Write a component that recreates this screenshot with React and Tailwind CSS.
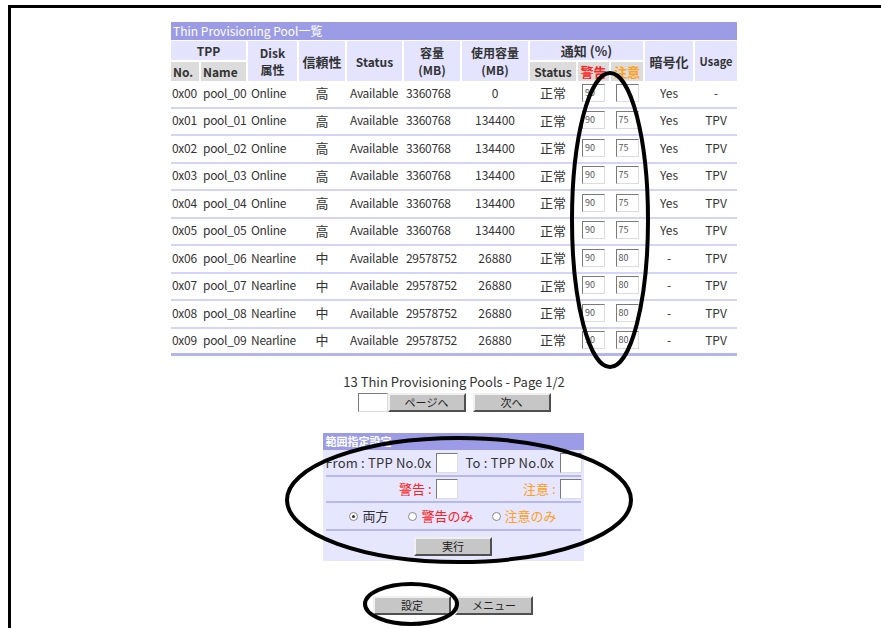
import React from 'react'

const cols = 'grid grid-cols-[28px_45px_49px_46px_55px_56px_66px_46px_31px_32px_48px_42px] gap-x-[2px]'

const pools = [
  ['0x00', 'pool_00', 'Online', '高', 'Available', '3360768', '0', '90', '', 'Yes', '-'],
  ['0x01', 'pool_01', 'Online', '高', 'Available', '3360768', '134400', '90', '75', 'Yes', 'TPV'],
  ['0x02', 'pool_02', 'Online', '高', 'Available', '3360768', '134400', '90', '75', 'Yes', 'TPV'],
  ['0x03', 'pool_03', 'Online', '高', 'Available', '3360768', '134400', '90', '75', 'Yes', 'TPV'],
  ['0x04', 'pool_04', 'Online', '高', 'Available', '3360768', '134400', '90', '75', 'Yes', 'TPV'],
  ['0x05', 'pool_05', 'Online', '高', 'Available', '3360768', '134400', '90', '75', 'Yes', 'TPV'],
  ['0x06', 'pool_06', 'Nearline', '中', 'Available', '29578752', '26880', '90', '80', '-', 'TPV'],
  ['0x07', 'pool_07', 'Nearline', '中', 'Available', '29578752', '26880', '90', '80', '-', 'TPV'],
  ['0x08', 'pool_08', 'Nearline', '中', 'Available', '29578752', '26880', '90', '80', '-', 'TPV'],
  ['0x09', 'pool_09', 'Nearline', '中', 'Available', '29578752', '26880', '90', '80', '-', 'TPV'],
]

const SmallBox = ({ value }) => (
  <div className="w-[23px] h-[18px] bg-white border border-t-[#7a7a7a] border-l-[#7a7a7a] border-b-[#dcdcdc] border-r-[#dcdcdc] text-[9px] text-[#555] leading-[16px] pl-[2px]">
    {value}
  </div>
)

const FormBox = () => (
  <div className="w-[22px] h-[20px] bg-white border border-t-[#7a7a7a] border-l-[#7a7a7a] border-b-[#dcdcdc] border-r-[#dcdcdc]" />
)

const Btn = ({ children }) => (
  <button className="w-[78px] h-[19px] bg-[#c6c6c6] border-2 border-t-[#f0f0f0] border-l-[#f0f0f0] border-b-[#505050] border-r-[#505050] text-[11px] leading-none text-[#222]">
    {children}
  </button>
)

const Radio = ({ checked }) => (
  <span className="w-[9px] h-[9px] rounded-full bg-white border border-[#888] flex items-center justify-center">
    {checked && <span className="w-[3px] h-[3px] rounded-full bg-[#333]" />}
  </span>
)

const Hd = ({ className = '', children }) => (
  <div className={`bg-[#e4e4ff] flex flex-col items-center justify-center font-bold text-[#333] leading-[17px] ${className}`}>
    {children}
  </div>
)

export default function App() {
  return (
    <div className="relative w-[881px] h-[628px] overflow-hidden bg-white pt-[5px] pl-[8px] font-['Noto_Sans_CJK_JP','Noto_Sans',sans-serif] text-[12px] text-[#333]">
      <div className="h-[623px] border-t-[3px] border-l-[3px] border-black">
        <div className="ml-[160px] w-[566px] mt-[14px]">
          <div className="h-[18px] bg-[#9c9ce6] text-white text-[12px] leading-[18px] pl-[2px]">
            Thin Provisioning Pool一覧
          </div>

          <div className={`${cols} gap-y-[2px] mt-[1px] grid-rows-[19px_19px] text-[12px]`}>
            <Hd className="col-span-2 text-[12px]">TPP</Hd>
            <Hd className="col-start-3 row-span-2 text-[12px]">
              <span>Disk</span>
              <span>属性</span>
            </Hd>
            <Hd className="col-start-4 row-span-2 text-[13px]">信頼性</Hd>
            <Hd className="col-start-5 row-span-2 text-[12px]">Status</Hd>
            <Hd className="col-start-6 row-span-2 text-[12px]">
              <span>容量</span>
              <span>(MB)</span>
            </Hd>
            <Hd className="col-start-7 row-span-2 text-[12px]">
              <span>使用容量</span>
              <span>(MB)</span>
            </Hd>
            <Hd className="col-start-8 col-span-3 text-[13px]">通知 (%)</Hd>
            <Hd className="col-start-11 row-span-2 text-[13px]">暗号化</Hd>
            <Hd className="col-start-12 row-span-2 text-[11px]">Usage</Hd>
            <div className="row-start-2 col-start-1 bg-[#dcdcdc] flex items-center pl-[2px] font-bold">No.</div>
            <div className="row-start-2 col-start-2 bg-[#dcdcdc] flex items-center pl-[2px] font-bold">Name</div>
            <div className="row-start-2 col-start-8 bg-[#dcdcdc] flex items-center justify-center font-bold text-[12px]">Status</div>
            <div className="row-start-2 col-start-9 bg-[#dcdcdc] flex items-center justify-center font-bold text-[13px] text-[#ff2020]">警告</div>
            <div className="row-start-2 col-start-10 bg-[#dcdcdc] flex items-center justify-center font-bold text-[13px] text-[#ffa020]">注意</div>
          </div>

          {pools.map((p, i) => (
            <div
              key={p[0]}
              className={`${cols} h-[27.5px] items-center pb-[2px] ${i === pools.length - 1 ? 'border-b-[3px] border-[#b4b4ee]' : 'border-b-2 border-[#d4d4fa]'}`}
            >
              <span className="pl-[1px] tracking-[-0.3px]">{p[0]}</span>
              <span className="pl-[2px] tracking-[-0.3px]">{p[1]}</span>
              <span className="pl-[3px] tracking-[-0.3px]">{p[2]}</span>
              <span className="text-center text-[13px]">{p[3]}</span>
              <span className="pl-[3px] tracking-[-0.3px]">{p[4]}</span>
              <span className="pl-[2px] tracking-[-0.3px]">{p[5]}</span>
              <span className="text-center">{p[6]}</span>
              <span className="text-center text-[13px]">正常</span>
              <span className="flex justify-center"><SmallBox value={p[7]} /></span>
              <span className="flex justify-center"><SmallBox value={p[8]} /></span>
              <span className="text-center">{p[9]}</span>
              <span className="text-center">{p[10]}</span>
            </div>
          ))}

          <div className="mt-[18px] text-center text-[13px] leading-[16px]">
            13 Thin Provisioning Pools - Page 1/2
          </div>
          <div className="mt-[3px] flex justify-center items-center">
            <div className="w-[30px] h-[19px] bg-white border border-t-[#7a7a7a] border-l-[#7a7a7a] border-b-[#dcdcdc] border-r-[#dcdcdc]" />
            <Btn>ページへ</Btn>
            <div className="w-[7px]" />
            <Btn>次へ</Btn>
          </div>

          <div className="mt-[21px] mx-auto w-[261px] bg-[#e6e6ff] pb-[4px] translate-x-[-1px]">
            <div className="h-[17px] bg-[#9c9ce6] text-white text-[11px] font-bold leading-[17px] pl-[3px]">
              範囲指定設定
            </div>
            <div className="flex h-[25px] items-center text-[13px]">
              <div className="w-[137px] flex items-center justify-between pl-[3px] pr-[2px]">
                <span className="tracking-[0.2px]">From : TPP No.0x</span>
                <FormBox />
              </div>
              <div className="w-[124px] flex items-center justify-between pl-[6px] pr-[2px]">
                <span className="tracking-[0.2px]">To : TPP No.0x</span>
                <FormBox />
              </div>
            </div>
            <div className="mx-[3px] h-[2px] bg-[#b8b8ee]" />
            <div className="flex h-[24px] items-center">
              <div className="w-[137px] flex items-center justify-end gap-[4px] pr-[2px]">
                <span className="text-[13px] text-[#ff2020]">警告 :</span>
                <FormBox />
              </div>
              <div className="w-[124px] flex items-center justify-end gap-[4px] pr-[2px]">
                <span className="text-[13px] text-[#ffa020]">注意 :</span>
                <FormBox />
              </div>
            </div>
            <div className="mx-[3px] h-[2px] bg-[#b8b8ee]" />
            <div className="flex h-[26px] items-center justify-center gap-[4px] text-[13px]">
              <Radio checked />
              <span className="mr-[16px]">両方</span>
              <Radio />
              <span className="mr-[14px] text-[#ff2020]">警告のみ</span>
              <Radio />
              <span className="text-[#ffa020]">注意のみ</span>
            </div>
            <div className="mx-[3px] h-[2px] bg-[#b8b8ee]" />
            <div className="flex justify-center pt-[6px] pb-[1px]">
              <Btn>実行</Btn>
            </div>
          </div>

          <div className="mt-[35px] flex justify-center gap-[4px] translate-x-[-1px]">
            <Btn>設定</Btn>
            <Btn>メニュー</Btn>
          </div>
        </div>
      </div>

      <svg className="absolute inset-0 pointer-events-none" width="881" height="628" viewBox="0 0 881 628">
        <g fill="none" stroke="#000" strokeWidth="4">
          <ellipse cx="610" cy="220" rx="38" ry="147" />
          <ellipse cx="459" cy="500" rx="172" ry="62" />
          <ellipse cx="411" cy="604" rx="46" ry="20" />
        </g>
      </svg>
    </div>
  )
}
